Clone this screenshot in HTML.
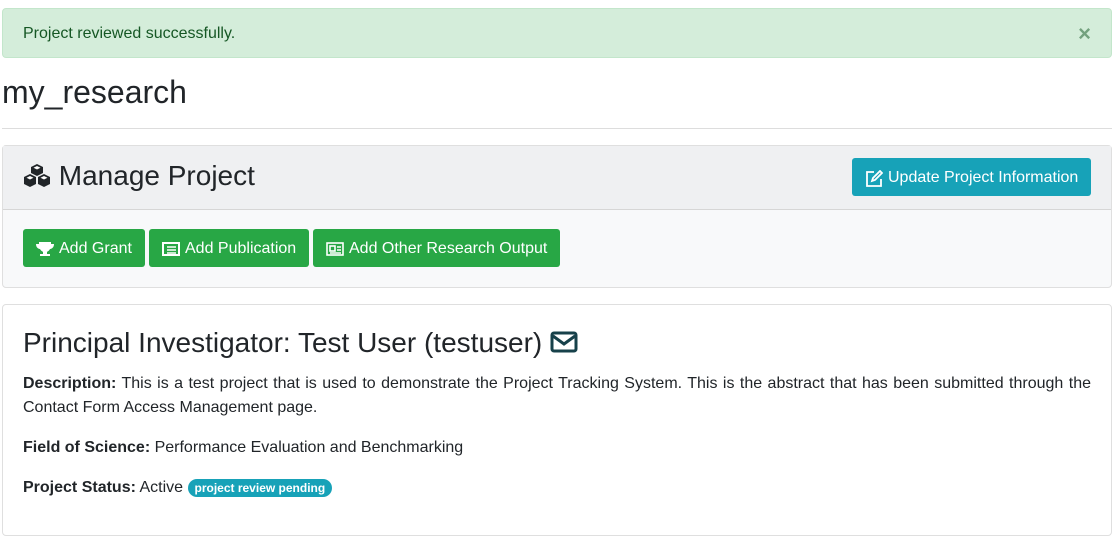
<!DOCTYPE html>
<html><head><meta charset="utf-8"><style>
*{box-sizing:border-box}
body{margin:0;width:1118px;height:544px;font-family:"Liberation Sans",sans-serif;color:#212529;background:#fff;position:relative;overflow:hidden}
.alert{position:absolute;left:2px;top:8px;width:1110px;height:50px;background:#d4edda;border:1px solid #c3e6cb;border-radius:4px;color:#155724;font-size:16px;padding:16px 20px}
.alert .x{position:absolute;right:20px;top:12px;font-size:22px;font-weight:bold;color:#155724;opacity:.5}
h1{position:absolute;left:2px;top:74px;margin:0;font-size:32px;font-weight:400}
hr{position:absolute;left:2px;top:128px;width:1110px;border:0;border-top:1px solid #ddd;margin:0}
.card{position:absolute;left:2px;width:1110px;border:1px solid #dfdfdf;border-radius:4px}
.c1{top:145px;height:143px;background:#f8f9fa}
.hd{height:64px;background:#eff0f2;border-bottom:1px solid #d6d6d6;position:relative}
.hd .t{position:absolute;left:20px;top:14px;font-size:28px}
.btn{position:absolute;color:#fff;font-size:16px;border-radius:3px;display:flex;align-items:center;gap:5px;padding:2px 13px 0;height:38px;white-space:nowrap}
.info{background:#17a2b8;left:849px;top:12px}
.g{background:#28a745;top:83px}
.c2{top:304px;height:232px;padding:20px}
.c2 h2{margin:0;font-size:28px;font-weight:400;margin-top:2px}
.c2 p{margin:0;font-size:16px;line-height:24px;text-align:justify}
.badge{background:#17a2b8;color:#fff;font-size:12px;font-weight:bold;border-radius:10px;padding:2px 7px}
</style></head><body>
<div class="alert">Project reviewed successfully.<span class="x">×</span></div>
<h1>my_research</h1>
<hr>
<div class="card c1">
<div class="hd"><div class="t"><svg width="28" height="24" viewBox="0 0 28 24" style="vertical-align:-2px"><g fill="#212529"><path d="M14 1l6 3v6l-6 3-6-3V4z"/><path d="M7 11l6 3v7l-6 3-6-3v-7z"/><path d="M21 11l6 3v7l-6 3-6-3v-7z"/></g><g fill="#fff"><path d="M14 3l3.5 1.7L14 6.5 10.5 4.7z"/><path d="M7 13l3.5 1.7L7 16.5 3.5 14.7z"/><path d="M21 13l3.5 1.7L21 16.5 17.5 14.7z"/></g></svg> Manage Project</div>
<div class="btn info"><svg width="18" height="17" viewBox="0 0 18 17" fill="none" stroke="#fff" stroke-width="1.8"><path d="M9 2H2v14h14V9"/><path d="M7 11l1-3 7-7 2 2-7 7z"/></svg>Update Project Information</div></div>
<div class="btn g" style="left:20px"><svg width="18" height="16" viewBox="0 0 18 16" fill="#fff"><path d="M3 1h12v2h3c0 4-3 5-4 5-1 2-2 2-3 3v2h3v2H4v-2h3v-2c-1-1-2-1-3-3-1 0-4-1-4-5h3z"/></svg>Add Grant</div>
<div class="btn g" style="left:146px"><svg width="18" height="14" viewBox="0 0 18 14" fill="none" stroke="#fff" stroke-width="2"><rect x="1" y="1" width="16" height="12"/><path d="M5 5h9M5 8h9M5 11h9" stroke-width="1.5"/></svg>Add Publication</div>
<div class="btn g" style="left:310px"><svg width="18" height="14" viewBox="0 0 18 14" fill="none" stroke="#fff" stroke-width="1.6"><rect x="1" y="1" width="16" height="12"/><rect x="4" y="4" width="5" height="5"/><path d="M11 5h4M11 8h4M4 11h11"/></svg>Add Other Research Output</div>
</div>
<div class="card c2">
<h2>Principal Investigator: Test User (testuser) <svg width="28" height="22" viewBox="0 0 28 22" fill="none" stroke="#17414a" stroke-width="3" style="vertical-align:-1px"><rect x="2" y="2" width="24" height="18" rx="2"/><path d="M3 5l11 8 11-8"/></svg></h2>
<p style="margin-top:13px"><b>Description:</b> This is a test project that is used to demonstrate the Project Tracking System. This is the abstract that has been submitted through the Contact Form Access Management page.</p>
<p style="margin-top:16px"><b>Field of Science:</b> Performance Evaluation and Benchmarking</p>
<p style="margin-top:16px"><b>Project Status:</b> Active <span class="badge">project review pending</span></p>
</div>
</body></html>
